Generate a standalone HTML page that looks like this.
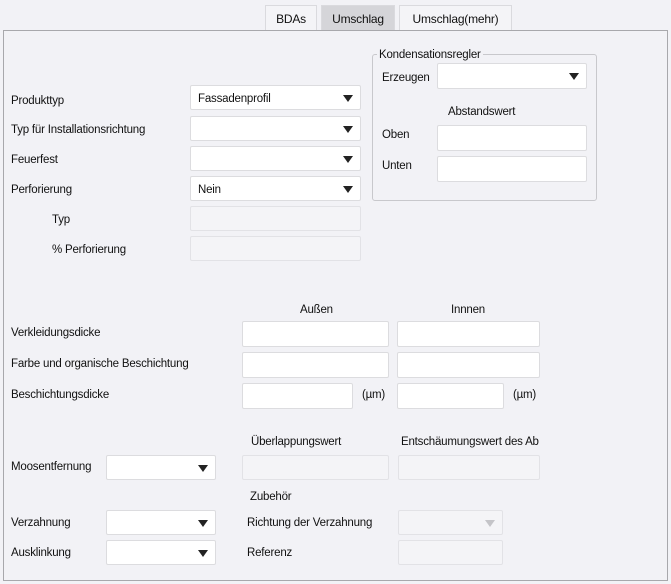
<!DOCTYPE html>
<html><head><meta charset="utf-8"><style>
body{margin:0;width:671px;height:584px;background:#f2f2f6;font-family:"Liberation Sans",sans-serif;font-size:11.5px;color:#111;position:relative;overflow:hidden;letter-spacing:-0.2px}
.a{position:absolute;white-space:nowrap;margin-top:2px}
.b{position:absolute;background:#fff;border:1px solid #dcdcdf;border-radius:2px;box-sizing:border-box}
.d{position:absolute;background:#f4f4f7;border:1px solid #e2e2e6;border-radius:2px;box-sizing:border-box}
.s::after{content:"";position:absolute;right:7px;top:50%;margin-top:-3px;border-left:5px solid transparent;border-right:5px solid transparent;border-top:7px solid #222}
.ds::after{content:"";position:absolute;right:7px;top:50%;margin-top:-3px;border-left:5px solid transparent;border-right:5px solid transparent;border-top:7px solid #c4c4c8}
.t{position:absolute;top:5px;height:25px;border:1px solid #dadade;border-bottom:none;box-sizing:border-box;background:#f4f4f7;text-align:center;line-height:26px;font-size:12px}
.v{padding-left:7px;line-height:26px}
</style></head><body>
<div class="t" style="left:265px;width:52px">BDAs</div>
<div class="t" style="left:321px;width:74px;background:#d5d5d9">Umschlag</div>
<div class="t" style="left:399px;width:113px">Umschlag(mehr)</div>
<div style="position:absolute;left:3px;top:30px;width:665px;height:551px;border:1px solid #a8a8ac;box-sizing:border-box"></div>
<div style="position:absolute;left:372px;top:54px;width:225px;height:147px;border:1px solid #c8c8cc;border-radius:3px;box-sizing:border-box"></div>
<div class="a" style="left:377px;top:47px;background:#f2f2f6;padding:0 2px">Kondensationsregler</div>
<div class="a" style="left:382px;top:70px">Erzeugen</div>
<div class="b s" style="left:437px;top:63px;width:150px;height:26px"></div>
<div class="a" style="left:448px;top:104px">Abstandswert</div>
<div class="a" style="left:382px;top:127px">Oben</div>
<div class="b" style="left:437px;top:125px;width:150px;height:26px"></div>
<div class="a" style="left:382px;top:158px">Unten</div>
<div class="b" style="left:437px;top:156px;width:150px;height:26px"></div>

<div class="a" style="left:11px;top:93px">Produkttyp</div>
<div class="b s v" style="left:190px;top:85px;width:171px;height:25px">Fassadenprofil</div>
<div class="a" style="left:11px;top:122px">Typ für Installationsrichtung</div>
<div class="b s" style="left:190px;top:116px;width:171px;height:25px"></div>
<div class="a" style="left:11px;top:152px">Feuerfest</div>
<div class="b s" style="left:190px;top:146px;width:171px;height:25px"></div>
<div class="a" style="left:11px;top:182px">Perforierung</div>
<div class="b s v" style="left:190px;top:176px;width:171px;height:25px">Nein</div>
<div class="a" style="left:52px;top:212px">Typ</div>
<div class="d" style="left:190px;top:206px;width:171px;height:25px"></div>
<div class="a" style="left:52px;top:242px">% Perforierung</div>
<div class="d" style="left:190px;top:236px;width:171px;height:25px"></div>

<div class="a" style="left:300px;top:302px">Außen</div>
<div class="a" style="left:451px;top:302px">Innnen</div>
<div class="a" style="left:11px;top:325px">Verkleidungsdicke</div>
<div class="b" style="left:242px;top:321px;width:147px;height:26px"></div>
<div class="b" style="left:397px;top:321px;width:143px;height:26px"></div>
<div class="a" style="left:11px;top:356px">Farbe und organische Beschichtung</div>
<div class="b" style="left:242px;top:352px;width:147px;height:26px"></div>
<div class="b" style="left:397px;top:352px;width:143px;height:26px"></div>
<div class="a" style="left:11px;top:387px">Beschichtungsdicke</div>
<div class="b" style="left:242px;top:383px;width:111px;height:26px"></div>
<div class="a" style="left:362px;top:387px">(µm)</div>
<div class="b" style="left:397px;top:383px;width:107px;height:26px"></div>
<div class="a" style="left:513px;top:387px">(µm)</div>

<div class="a" style="left:251px;top:434px">Überlappungswert</div>
<div class="a" style="left:401px;top:434px;width:138px;overflow:hidden">Entschäumungswert des Abstands</div>
<div class="a" style="left:11px;top:459px">Moosentfernung</div>
<div class="b s" style="left:106px;top:455px;width:110px;height:25px"></div>
<div class="d" style="left:242px;top:455px;width:147px;height:25px"></div>
<div class="d" style="left:398px;top:455px;width:142px;height:25px"></div>
<div class="a" style="left:250px;top:489px">Zubehör</div>
<div class="a" style="left:11px;top:515px">Verzahnung</div>
<div class="b s" style="left:106px;top:510px;width:110px;height:25px"></div>
<div class="a" style="left:247px;top:515px">Richtung der Verzahnung</div>
<div class="d ds" style="left:398px;top:510px;width:105px;height:25px"></div>
<div class="a" style="left:11px;top:545px">Ausklinkung</div>
<div class="b s" style="left:106px;top:540px;width:110px;height:25px"></div>
<div class="a" style="left:247px;top:545px">Referenz</div>
<div class="d" style="left:398px;top:540px;width:105px;height:25px"></div>
</body></html>
